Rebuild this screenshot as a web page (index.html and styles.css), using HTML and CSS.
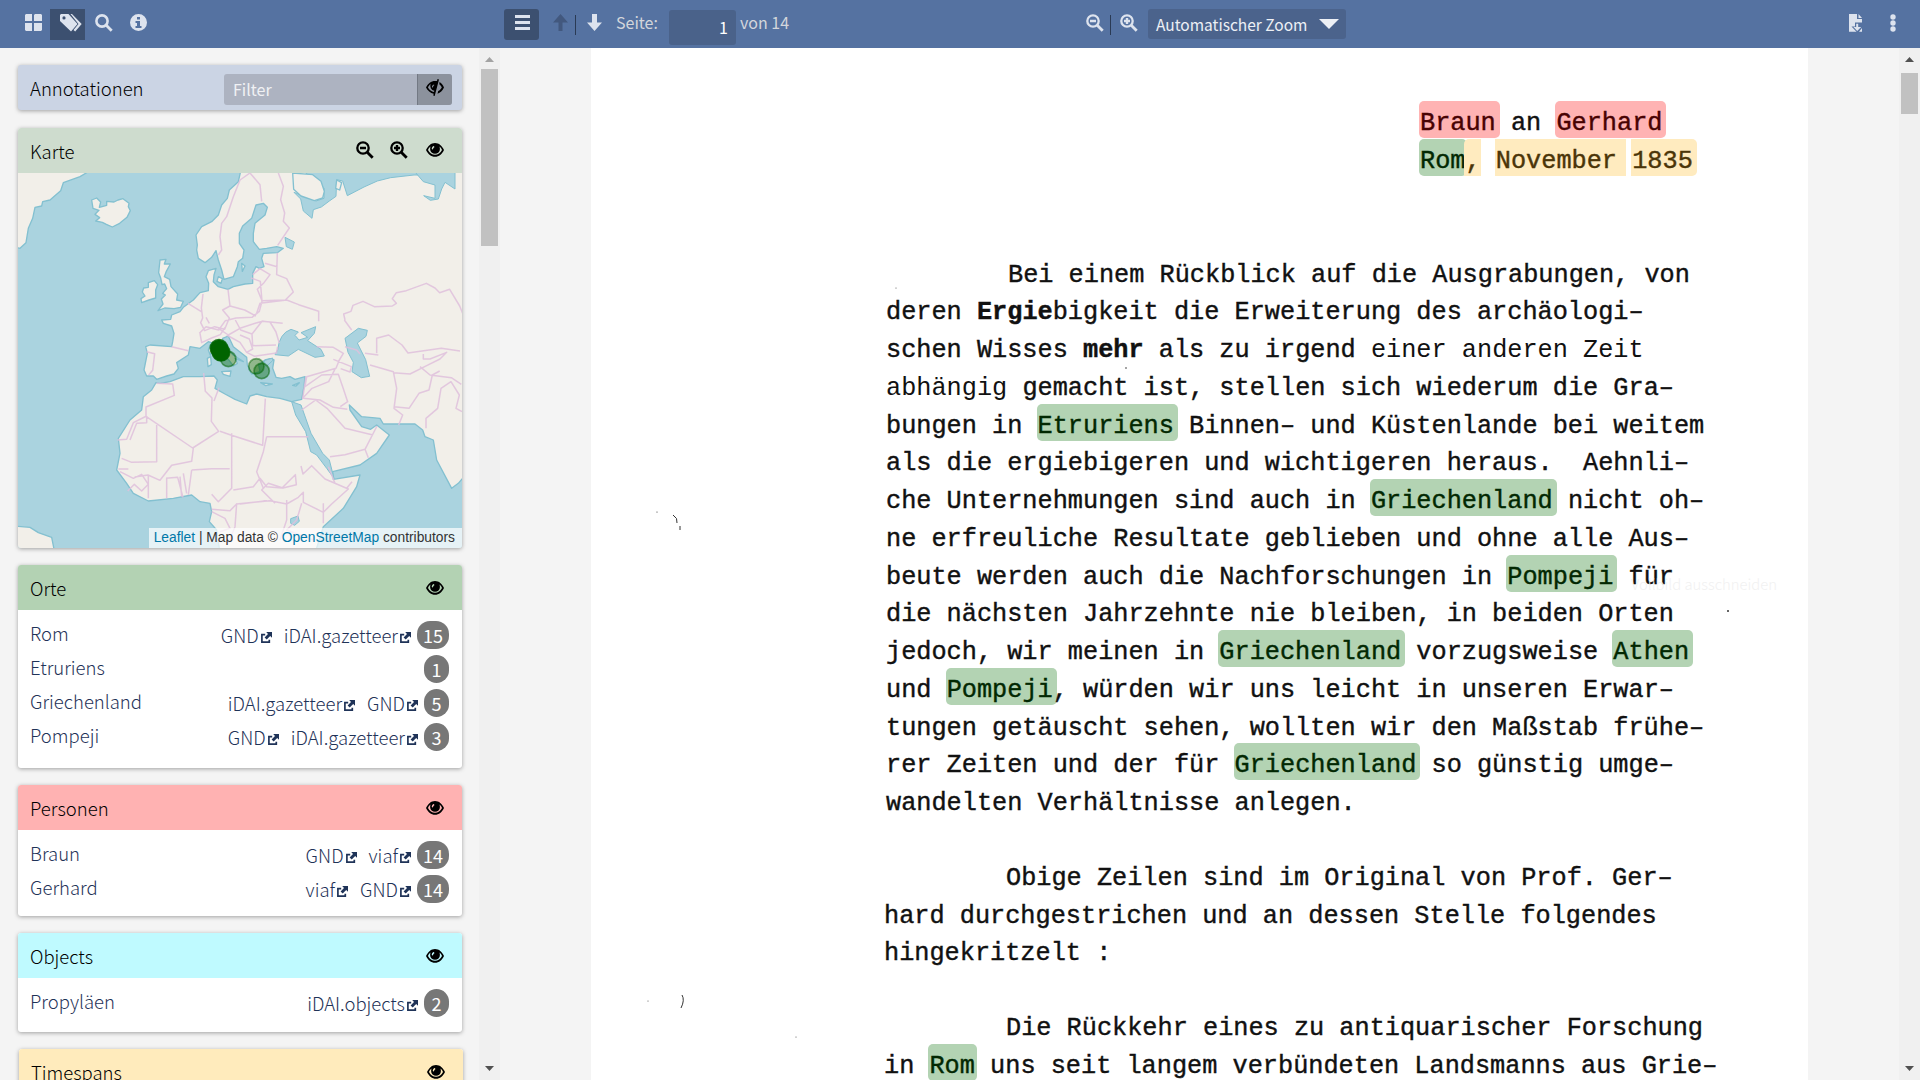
FILE: index.html
```html
<!DOCTYPE html>
<html lang="de">
<head>
<meta charset="utf-8">
<title>Annotationen</title>
<link rel="stylesheet" href="styles.css">
</head>
<body>
<svg class="sprite" aria-hidden="true">
  <symbol id="i-grid" viewBox="0 0 17 17"><path d="M1 0h6v7H0V1zM10 0h6l1 1v6H9V1zM0 9h7v8H1l-1-1zM9 9h8v7l-1 1H9z"/></symbol>
  <symbol id="i-tags" viewBox="0 0 22 18"><path fill-rule="evenodd" d="M1 0h7.500l9 10-6.500 7.500L0 7V1zM4 2.300a1.600 1.600 0 1 0 0 3.200 1.600 1.600 0 0 0 0-3.200z"/><path d="M10.500 0H12l9.700 10-6.500 7.500-1.700-1.600 5-5.900z"/></symbol>
  <symbol id="i-search" viewBox="0 0 18 18"><circle cx="7" cy="7" r="5.600" fill="none" stroke="currentColor" stroke-width="2.600"/><path d="M10 12l2-2 5.700 5.700-2 2z"/></symbol>
  <symbol id="i-minus" viewBox="0 0 18 18"><circle cx="7" cy="7" r="5.700" fill="none" stroke="currentColor" stroke-width="2.300"/><path d="M4 5.800h6v2.400H4zM10 12l2-2 5.700 5.700-2 2z"/></symbol>
  <symbol id="i-plus" viewBox="0 0 18 18"><circle cx="7" cy="7" r="5.700" fill="none" stroke="currentColor" stroke-width="2.300"/><path d="M5.800 4h2.400v1.800H10v2.400H8.200V10H5.800V8.200H4V5.800h1.800zM10 12l2-2 5.700 5.700-2 2z"/></symbol>
  <symbol id="i-info" viewBox="0 0 17 17"><path fill-rule="evenodd" d="M8.500 0a8.500 8.500 0 1 0 0 17 8.500 8.500 0 0 0 0-17zM7 3h3v2.500H7zM5.500 7H10v5h1.500v2h-6v-2H7V9H5.500z"/></symbol>
  <symbol id="i-menu" viewBox="0 0 15 15"><path d="M0 0h15v3H0zM0 6h15v3H0zM0 12h15v3H0z"/></symbol>
  <symbol id="i-down" viewBox="0 0 15 17"><path d="M5 0h5v8.500h5L7.500 17 0 8.500h5z"/></symbol>
  <symbol id="i-up" viewBox="0 0 15 17"><path d="M5.500 17h4V8.500H15L7.500 0 0 8.500h5.500z"/></symbol>
  <symbol id="i-file" viewBox="0 0 14 18"><path d="M0 0h8v5h5v3.500H6v4H2.500l5 5.200H0zM9.500 0L13 4H9.500zM7.200 9.700h2V13h3L8.200 17 4.500 13h2.700zM13 14v3.700h-3z"/></symbol>
  <symbol id="i-eye" viewBox="0 0 18 14"><path fill-rule="evenodd" d="M9 0c4 0 7 2.800 9 7-2 4-5 6.800-9 6.800S2 11 0 7C2 2.800 5 0 9 0zM4.600 3.500C3.300 4.500 2.500 5.600 2 7c1.500 3.200 4 4.800 7 4.800s5.500-1.600 7-4.800c-.5-1.400-1.300-2.500-2.600-3.500.4 1 .5 1.700.5 2.400A4.900 4.900 0 0 1 4.100 6c0-.8.100-1.600.5-2.500zM8 3C6.600 3.300 5.800 4.300 5.800 5.700c0 .5.200.8.600.8.800 0 .8-2 2-2.300z"/></symbol>
  <symbol id="i-eyeoff" viewBox="0 0 18 17"><path fill-rule="evenodd" d="M9 2l2-.1.500-1.900 1.500.4L8.700 17l-1.500-.4.500-1.800C4.300 14 1.700 11.900 0 8.500 2 4.500 5 2 9 2zM4.600 5C3.300 6 2.500 7.200 2 8.500c1.300 2.700 3.600 4 6 4.500l.3-1.200A5 5 0 0 1 4.600 5zM8 5.500C6.600 6 5.900 6.800 6 8c.1.800.8.800 1 0 .2-1 .6-1.500 1.300-1.800z"/><path d="M13.500 3C15.500 4.200 17 6 18 8.500c-1.600 3.200-3.600 5.300-6.500 6.200l.7-2.600c1.600-.8 2.800-2 3.600-3.600-.6-1.300-1.300-2.300-2.500-3.200z"/></symbol>
  <symbol id="i-ext" viewBox="0 0 11 11"><path d="M5.200 0H11v5.800L9.200 4 5.700 7.500 3.600 5.400 7 1.900z"/><path d="M4.200 2.700H.9v7.400h7.400V7.800" fill="none" stroke="currentColor" stroke-width="1.700"/></symbol>
</svg>

<header class="toolbar">
  <div class="group tools">
    <span class="btn"><svg width="17" height="17"><use href="#i-grid"/></svg></span>
    <span class="btn active tags"><svg width="22" height="18"><use href="#i-tags"/></svg></span>
    <span class="btn"><svg width="18" height="18"><use href="#i-search"/></svg></span>
    <span class="btn"><svg width="17" height="17"><use href="#i-info"/></svg></span>
  </div>
  <div class="group pager">
    <span class="btn active round"><svg width="15" height="15"><use href="#i-menu"/></svg></span>
    <svg class="up" width="15" height="17"><use href="#i-up"/></svg>
    <i class="divider"></i>
    <svg class="down" width="15" height="17"><use href="#i-down"/></svg>
    <span class="label">Seite:</span>
    <span class="pagebox">1</span>
    <span class="total">von 14</span>
  </div>
  <div class="group zoom">
    <svg width="18" height="18"><use href="#i-minus"/></svg>
    <i class="divider"></i>
    <svg width="18" height="18"><use href="#i-plus"/></svg>
    <span class="select"><span>Automatischer Zoom</span><svg width="20" height="10"><path d="M0 0h20L10 10z"/></svg></span>
  </div>
  <div class="group extra">
    <svg width="14" height="18"><use href="#i-file"/></svg>
    <svg width="6" height="18"><circle cx="3" cy="3" r="2.700"/><circle cx="3" cy="9" r="2.700"/><circle cx="3" cy="15" r="2.700"/></svg>
  </div>
</header>

<main class="main">
  <aside class="sidebar">
    <section class="panel filter">
      <h2>Annotationen</h2>
      <div class="field"><span>Filter</span><b><svg width="18" height="17"><use href="#i-eyeoff"/></svg></b></div>
    </section>

    <section class="panel karte">
      <div class="head"><h2>Karte</h2><svg width="18" height="18"><use href="#i-minus"/></svg><svg width="18" height="18"><use href="#i-plus"/></svg><svg width="18" height="14"><use href="#i-eye"/></svg></div>
      <div class="map">
        <svg width="444" height="375" viewBox="54 159 1332 1125">
          <rect x="54" y="159" width="1332" height="1125" fill="#aad3df"/>
          <g class="land">
            <path d="M40 140H290L240 170 190 188 182 212 150 240 128 245 125 258 105 262 98 295 85 325 78 368 60 385 40 380z"/>
            <path d="M275 240l15-6 12 12-4 16 22-6 0-12 22 2 12-6 15-4 18 14-2 10 6 12-10 20-22 18-22 11-18-8-12-6-20-4 12-10-14-10 12-12-18-6z"/>
            <path d="M480 420l18-2-5 14h18l-12 22-6 16 16 8 4 22 20 22-3 18 20 4-8 18-20 4-28-2-20 8 15-20-5-15 12-12-8-5 12-14-6-14-8 2-4-20-6-16z"/>
            <path d="M445 488l18-6 10 12-6 16v24l-20 6-22 8-2-12 12-8-8-12 4-12 14-2z"/>
            <path d="M725 140L715 185 688 210 682 235 665 255 655 285 635 305 605 320 588 345 592 375 590 390 595 415 615 428 635 412 648 392 655 420 665 450 672 478 700 470 712 440 715 425 728 415 732 390 718 370 718 340 728 318 755 295 768 255 790 250 802 262 795 285 765 310 760 340 760 365 778 388 800 385 830 380 850 385 832 398 790 400 785 415 792 440 778 445 768 440 758 460 758 490 735 492 700 500 684 508 655 500 640 485 642 465 648 445 625 452 618 470 626 490 625 512 600 518 580 540 550 562 540 575 515 585 512 598 485 600 490 610 515 618 522 640 518 665 515 680 450 675 437 680 442 700 432 750 440 768 460 768 470 778 500 768 522 762 535 745 530 728 565 705 570 680 600 685 625 665 645 672 652 695 685 718 700 738 712 730 705 715 730 725 700 705 675 680 668 655 685 648 700 680 740 712 742 735 755 762 780 755 776 735 795 720 810 716 822 720 818 745 828 772 845 775 870 770 885 778 915 770 912 800 905 838 875 845 840 835 800 830 770 822 750 828 740 852 705 838 675 822 645 805 652 780 642 768 600 770 550 770 510 785 480 790 468 788 455 810 430 830 425 870 390 900 355 955 360 1000 350 1050 380 1090 400 1120 445 1143 520 1135 575 1125 600 1145 630 1150 635 1175 628 1205 650 1230 660 1300 945 1300 970 1220 1030 1165 1070 1100 1080 1065 1000 1078 998 1055 1080 1035 1130 1000 1168 945 1130 915 1112 928 1085 920 1050 870 1048 855 1085 890 1140 895 1150 912 1245 912 1268 930 1275 950 1300 960 1310 1020 1355 1105 1375 1090 1400 1060V140z"/>
            <path d="M40 1218l50 4 25 16 40 14 8 40H40z"/>
            <path d="M665 755l28-2-3 16-20-6zM622 715l10-5 2 24-10 6zM625 690l6-16 5 20-5 12zM782 788l35 4-20 5zM878 796l20-8-10 10z"/>
            <path d="M655 470l12 6-4 14-12-6zM725 430l10 8-8 16z"/>
          </g>
          <g class="water">
            <path d="M875 845l28 10 30 85 35 60 20 20 14 55-22-30-30-40-18-10-15-60-30-50z" class="redsea"/>
            <path d="M833 690q5-50 40-62l22 8-10 10 12 14 26-8-20-14 44-18-4 20-20 22 40 26 10 20-28 4-50-24-30 20-40-4z"/>
            <path d="M1035 655l40-30 27 6-4 18-26 20 15 30 10 20 12 50-25 4-28-18 4-28-16-30z"/>
            <path d="M855 352l28 14-6 22-18-8zM872 1196l22-8 4 16-14 12-12-6zM792 722l26-8 0 8-20 18z"/>
            <path d="M882 160l30-5 40 30 20 20 0 30-24 8-66-26 20 20 8 36 26 22 4-26 24-8 24-18 20-14 2-50 18 4 14 44 50-26 40-18 40-10 70-8 40 0 10-10v-30H882z"/>
            <path d="M1240 150l30 35 35 10 0 40-34-8 20 14 24-4 10-30 10-20 30 20V150z"/>
          </g>
          <path class="land" d="M878 159l60 5 25 20 10 30-5 20-25 8-40-14-22-20zM1010 180l15 8-6 22-12-5z"/>
          <path class="borders" d="M750 159L720 180 700 230 680 290 665 310 660 350 665 390 655 405M750 159l30 35 5 50M835 159l15 40-8 40 12 40-4 25 18 20-35 52M832 398l-2 66 30 12 20 40-24 24-70 2-14-34 20-20 18-24-30-18-22 18M795 430l36 10M684 508l6 50-22 12 20 24-14 34-30-8-30 12-12-24 6-14-4-30 5-42M604 575l-40-25M598 640l20-20 38 10 20-28 32-8 48-2 22-18 8-30-5-60-28-10M690 558l44 12 34 18M618 592l10 18M600 640l5 28 30-14 26-10 14-22M655 625l30 20 35-20 48-16 20-5 60 6M706 600l16 30 34 12 30-38M756 642l2 35 70-2M680 645l40 22 20 30 18-10-10-30-28-12M740 697l24 12 65-10 4-18M786 604l24 2 18 30 10 34M770 580l10-30 80-10 36 14 60 20 0 30M515 680l50 12M440 695l24 6-6 50-12 14M1035 600l-4-18 22-8 6-18 30-12 34 16 54-2 12-8-12-14 12-18 30-6 60-22 26 14 14 14 30-10 30 50 10 25M1055 630l-22-30M1035 680l35 10 10 12M950 680l50 2 30 18-12 20-10 25-88 25-5 30 50-35 50-2 14 40 14 42-22 15M1000 718l54 22-4 16-28-10M918 770l-10 65 28-30 50-20 20-40M910 835l50 5 40 22 42 6M905 870l42-30 34 25 54 60 84 20M990 1010l45-6 60-16 36-70M1095 988l10 25M470 790l48 2 5 34-85 35v28l140 95 78-50-22-30 2-70-20-20-5-55M657 803l-15 40M440 888l-40 20-20 50-28 2M440 888l0 20-30 2-20 50M470 915v110l-75 2-30-12M580 984l-5 40-60 12-35 45-36-16-40 6M660 934l30 10 98 32 8-140M800 950l125 0M695 940l0 90 0 75-40 40-20-22M800 950l-10 45-20 60 20 50M575 1050l60-4 54 0M575 1050l-10 75M500 1075l0 60M540 1070l5 60M498 1075l35-3 16 60M550 1060l10 60M445 1065l0 70M355 1047l30 0M360 1055l40 20 25-12 20 30-20 20-22-20-20 20M700 1110l60-10 20-25 20 25 46 4 40-40 3 30-40 10-44-14-20 20 40 40M635 1168l55 4 20-20 100-10 50 10 35-20 15-15 0 30 60 30 25-25 50-45-70-30-40-40-26 25-6-24M970 1150l0 60M860 1140l0 60-20 60M710 1150l-5 70-20 50M635 1175l40 20 15 30-30 10M800 1142l-80 10M985 1040l20 50 35 15 16-20M905 1150l-15 50-30 30 80 30M1130 700v-45l36-10 40 30 18 24 100-14 56 8M1110 735l70 20 10 50-8 60 26 20-12 30M1180 758l50 4 50-25 40-20 20-20-50 20-20 0 0-15M1182 860l45 5 30-45 30-10 10-45 22-12M1278 925l0-30 35-30 10-60 30-20 25 40-10 40 18 10M1260 740l30 25 64 8 30 20M1095 700l40 5"/>
          <g class="pins"><circle cx="685" cy="717" r="23"/><circle cx="769" cy="739" r="23"/><circle cx="785" cy="753" r="23"/><circle class="solid" cx="657" cy="685" r="26"/><circle class="solid" cx="663" cy="697" r="26"/></g>
        </svg>
        <div class="credit"><a>Leaflet</a> | Map data © <a>OpenStreetMap</a> contributors</div>
      </div>
    </section>

    <section class="panel orte">
      <div class="head"><h2>Orte</h2><svg width="18" height="14"><use href="#i-eye"/></svg></div>
      <div class="row"><span class="name">Rom</span><a>GND<svg><use href="#i-ext"/></svg></a><a>iDAI.gazetteer<svg><use href="#i-ext"/></svg></a><em>15</em></div>
      <div class="row"><span class="name">Etruriens</span><em>1</em></div>
      <div class="row"><span class="name">Griechenland</span><a>iDAI.gazetteer<svg><use href="#i-ext"/></svg></a><a>GND<svg><use href="#i-ext"/></svg></a><em>5</em></div>
      <div class="row"><span class="name">Pompeji</span><a>GND<svg><use href="#i-ext"/></svg></a><a>iDAI.gazetteer<svg><use href="#i-ext"/></svg></a><em>3</em></div>
    </section>

    <section class="panel personen">
      <div class="head"><h2>Personen</h2><svg width="18" height="14"><use href="#i-eye"/></svg></div>
      <div class="row"><span class="name">Braun</span><a>GND<svg><use href="#i-ext"/></svg></a><a>viaf<svg><use href="#i-ext"/></svg></a><em>14</em></div>
      <div class="row"><span class="name">Gerhard</span><a>viaf<svg><use href="#i-ext"/></svg></a><a>GND<svg><use href="#i-ext"/></svg></a><em>14</em></div>
    </section>

    <section class="panel objects">
      <div class="head"><h2>Objects</h2><svg width="18" height="14"><use href="#i-eye"/></svg></div>
      <div class="row"><span class="name">Propyläen</span><a>iDAI.objects<svg><use href="#i-ext"/></svg></a><em>2</em></div>
    </section>

    <section class="panel timespans">
      <div class="head"><h2>Timespans</h2><svg width="18" height="14"><use href="#i-eye"/></svg></div>
    </section>
  </aside>

  <div class="scroll side"><i class="arrow top"></i><i class="thumb"></i><i class="arrow bottom"></i></div>

  <div class="viewer">
    <article class="page">
      <div class="letter-head"><div class="ln"><mark class="person">Braun</mark> an <mark class="person">Gerhard</mark></div><div class="ln"><mark class="place tight">Rom</mark><mark class="time comma">,</mark> <mark class="time month">November</mark> <mark class="time year">1835</mark></div></div>
      <div class="para first"><div class="ln indent">Bei einem Rückblick auf die Ausgrabungen, von</div><div class="ln">deren <b>Ergie</b>bigkeit die Erweiterung des archäologi–</div><div class="ln">schen Wisses <b>mehr</b> als zu irgend <i>einer anderen Zeit</i></div><div class="ln"><i>abhängig</i> gemacht ist, stellen sich wiederum die Gra–</div><div class="ln">bungen in <mark class="place">Etruriens</mark> Binnen– und Küstenlande bei weitem</div><div class="ln">als die ergiebigeren und wichtigeren heraus.  Aehnli–</div><div class="ln">che Unternehmungen sind auch in <mark class="place">Griechenland</mark> nicht oh–</div><div class="ln">ne erfreuliche Resultate geblieben und ohne alle Aus–</div><div class="ln">beute werden auch die Nachforschungen in <mark class="place">Pompeji</mark> für</div><div class="ln">die nächsten Jahrzehnte nie bleiben, in beiden Orten</div><div class="ln">jedoch, wir meinen in <mark class="place">Griechenland</mark> vorzugsweise <mark class="place">Athen</mark></div><div class="ln">und <mark class="place">Pompeji</mark>, würden wir uns leicht in unseren Erwar–</div><div class="ln">tungen getäuscht sehen, wollten wir den Maßstab frühe–</div><div class="ln">rer Zeiten und der für <mark class="place">Griechenland</mark> so günstig umge–</div><div class="ln">wandelten Verhältnisse anlegen.</div></div>
      <div class="para"><div class="ln indent">Obige Zeilen sind im Original von Prof. Ger–</div><div class="ln">hard durchgestrichen und an dessen Stelle folgendes</div><div class="ln">hingekritzelt :</div></div>
      <div class="para"><div class="ln indent">Die Rückkehr eines zu antiquarischer Forschung</div><div class="ln">in <mark class="place tight">Rom</mark> uns seit langem verbündeten Landsmanns aus Grie–</div></div>
      <span class="ghost">Vollbild ausschneiden</span>
      <svg class="specks" width="1217" height="1032"><path d="M82 467q5 3 4 8M89 478v4M91 947q3 5-1 13" /><circle cx="1137" cy="563" r="1"/><circle cx="66" cy="464" r=".6"/><circle cx="57" cy="953" r=".5"/><circle cx="205" cy="989" r=".5"/><circle cx="305" cy="240" r=".5"/><circle cx="535" cy="320" r=".8"/></svg>
    </article>
  </div>

  <div class="scroll doc"><i class="arrow top"></i><i class="thumb"></i><i class="arrow bottom"></i></div>
</main>
</body>
</html>
```
FILE: styles.css
```css
* { box-sizing: border-box; }
body {
  margin: 0;
  width: 1920px;
  height: 1080px;
  overflow: hidden;
  background: #f4f4f4;
  font-family: "Noto Sans CJK SC", "Noto Sans", sans-serif;
  font-weight: 300;
  font-size: 18.5px;
  line-height: 24px;
  color: #000;
}
svg { fill: currentColor; flex: none; display: block; }
.sprite { display: none; }

/* Toolbar */
.toolbar {
  height: 48px;
  background: #5572a1;
  color: #dde3ee;
  display: flex;
  font-weight: 400;
  font-size: 16px;
}
.group { display: flex; align-items: flex-start; }
.tools { width: 504px; padding: 9px 0 0 15px; }
.btn {
  width: 35px;
  height: 31px;
  padding: 5px 0 0 10px;
}
.btn.active { background: #3c5070; }
.btn.tags { padding-left: 10px; }
.btn.round { border-radius: 3px; padding: 6px 0 0 11px; }
.divider { width: 1px; height: 20px; background: #2a3a54; }
.pager { width: 582px; padding-top: 9px; }
.up { margin: 5px 0 0 14px; color: #42587e; }
.pager .divider { margin: 6px 11px 0 7px; }
.down { margin-top: 5px; }
.label { width: 52px; margin: 1px 0 0 14px; color: #d3d6db; }
.pagebox {
  width: 67px;
  height: 35px;
  margin: 1px 4px 0 1px;
  padding: 5px 8px 0 0;
  border-radius: 3px;
  background: #4a628a;
  color: #fff;
  text-align: right;
}
.total { margin-top: 1px; color: #d3d6db; }
.zoom { width: 763px; padding-top: 9px; }
.zoom > svg { margin-top: 5px; }
.zoom .divider { margin: 6px 9px 0 6px; }
.select {
  width: 198px;
  height: 30px;
  margin-left: 10px;
  padding: 0 7px 0 8px;
  border-radius: 3px;
  background: #4b638c;
  display: flex;
  align-items: center;
  justify-content: space-between;
  line-height: 32px;
  font-size: 15.5px;
  color: #edf0f5;
}
.extra { padding-top: 14px; gap: 27px; }

/* Sidebar */
.main { display: flex; height: 1032px; }
.sidebar {
  width: 479px;
  padding: 17px 17px 0 18px;
  display: flex;
  flex-direction: column;
  gap: 17px;
  overflow: hidden;
}
.panel {
  width: 444px;
  flex: none;
  border-radius: 3px;
  background: #fff;
  box-shadow: 0 1px 4px rgba(0, 0, 0, .35);
  overflow: hidden;
}
h2 { margin: 0; font-size: 18.5px; font-weight: 300; line-height: 24px; flex: 1; }
.filter {
  height: 45px;
  padding: 9px 10px 0 12px;
  display: flex;
  background: #cbd4e4;
}
.filter h2 { padding-top: 2px; }
.field {
  width: 228px;
  height: 31px;
  display: flex;
  border-radius: 3px;
  overflow: hidden;
  background: #adb3c1;
  color: #f0f1f4;
  font-size: 16px;
  font-weight: 400;
}
.field span { flex: 1; padding: 3px 9px; }
.field b { width: 35px; padding: 5px 0 0 8px; background: #8c929d; border-left: 1px solid #737984; color: #000; }
.head {
  height: 45px;
  padding: 11px 18px 0 12px;
  display: flex;
  align-items: flex-start;
}
.head svg { margin-top: 5px; }
.karte { height: 420px; margin-top: 1px; }
.karte .head svg { margin: 2px 0 0 16px; }
.karte .head svg:last-child { margin: 4px 0 0 18px; }
.karte .head { background: #cedcce; }
.map { position: relative; height: 375px; }
.land { fill: #f2efe9; stroke: #83c0d0; stroke-width: 4; stroke-linejoin: round; }
.water { fill: #aad3df; stroke: #83c0d0; stroke-width: 3; stroke-linejoin: round; }
.borders { fill: none; stroke: #dfc0dc; stroke-width: 4.500; stroke-linejoin: round; opacity: .85; }
.pins { fill: #006400; fill-opacity: .4; stroke: #006400; stroke-opacity: .5; stroke-width: 5; }
.solid { fill-opacity: 1; stroke-opacity: .85; }
.credit {
  position: absolute;
  right: 0;
  bottom: 0;
  width: 313px;
  height: 20px;
  padding-right: 7px;
  background: rgba(255, 255, 255, .7);
  font: 13.8px/19px "Liberation Sans", Arial, sans-serif;
  color: #333;
  text-align: right;
  white-space: nowrap;
}
.credit a { color: #0078a8; }
.orte { height: 203px; }
.orte .head { background: #b3d2b3; }
.personen { height: 131px; }
.personen .head { background: #ffb2b2; }
.objects { height: 99px; }
.objects .head { background: #bffaff; }
.timespans { height: 60px; margin-left: 1px; }
.timespans .head { background: #ffebbc; }
.row {
  height: 34px;
  padding: 0 13px 0 12px;
  display: flex;
  align-items: flex-start;
  color: #1f3358;
}
.head + .row { margin-top: 11px; }
.name { flex: 1; }
.row a { display: flex; padding-top: 2px; margin-left: 12px; }
.row a svg { width: 11px; height: 11px; margin: 9px 0 0 2px; }
.row em {
  min-width: 25px;
  height: 28px;
  margin-left: 6px;
  padding: 2px 6px 0;
  border-radius: 13px;
  background: #777;
  color: #fff;
  font-size: 18px;
  font-style: normal;
  font-weight: 400;
  text-align: center;
}

/* Scrollbars */
.scroll {
  width: 21px;
  flex: none;
  display: flex;
  flex-direction: column;
  align-items: center;
  background: #f0f0f0;
  padding: 9px 0;
}
.arrow { width: 9px; height: 5px; background: #505050; }
.arrow.top { clip-path: polygon(50% 0, 100% 100%, 0 100%); }
.arrow.bottom { clip-path: polygon(0 0, 100% 0, 50% 100%); margin-top: auto; }
.thumb { width: 17px; background: #c1c1c1; }
.side .top { background: #a3a3a3; }
.side .thumb { height: 177px; margin-top: 7px; }
.doc .thumb { height: 41px; margin-top: 11px; }

/* Typewritten page */
.viewer { width: 1399px; padding-left: 91px; overflow: hidden; }
.page {
  position: relative;
  width: 1217px;
  height: 1032px;
  padding-left: 293px;
  background: #fff;
  font-family: "Liberation Mono", "Courier New", monospace;
  font-weight: 400;
  font-size: 25.25px;
  color: #111;
  -webkit-text-stroke: .4px currentColor;
}
.ln { height: 37.760px; line-height: 37.760px; white-space: pre; }
.ln i { font-style: normal; -webkit-text-stroke: 0; }
.indent { padding-left: 122px; }
.letter-head { padding: 57px 0 0 536px; }
.para { margin-bottom: 37.100px; }
.first { margin-top: 76px; padding-left: 2px; }
mark {
  padding: 8px 4px 0 1px;
  margin: 0 -4px 0 -1px;
  border-radius: 5px;
}
.person { background: #ffb3b3; color: #480202; }
.place { background: #b3d3b3; color: #022802; }
.time { background: #ffebbf; color: #4b3508; }
.tight { padding-right: 2px; margin-right: -2px; }
.comma { border-radius: 5px 0 0 0; padding-right: 0; margin-right: 0; }
.month { border-radius: 0; padding-right: 9px; margin-right: -9px; }
.year { border-radius: 0 5px 5px 0; }
.ghost {
  position: absolute;
  left: 1040px;
  top: 524px;
  font: 300 14.8px/24px "Noto Sans CJK SC", sans-serif;
  color: #f1f1f1;
  -webkit-text-stroke: 0;
}
.specks { position: absolute; left: 0; top: 0; fill: #333; }
.specks path { fill: none; stroke: #333; stroke-width: 1; }
```
